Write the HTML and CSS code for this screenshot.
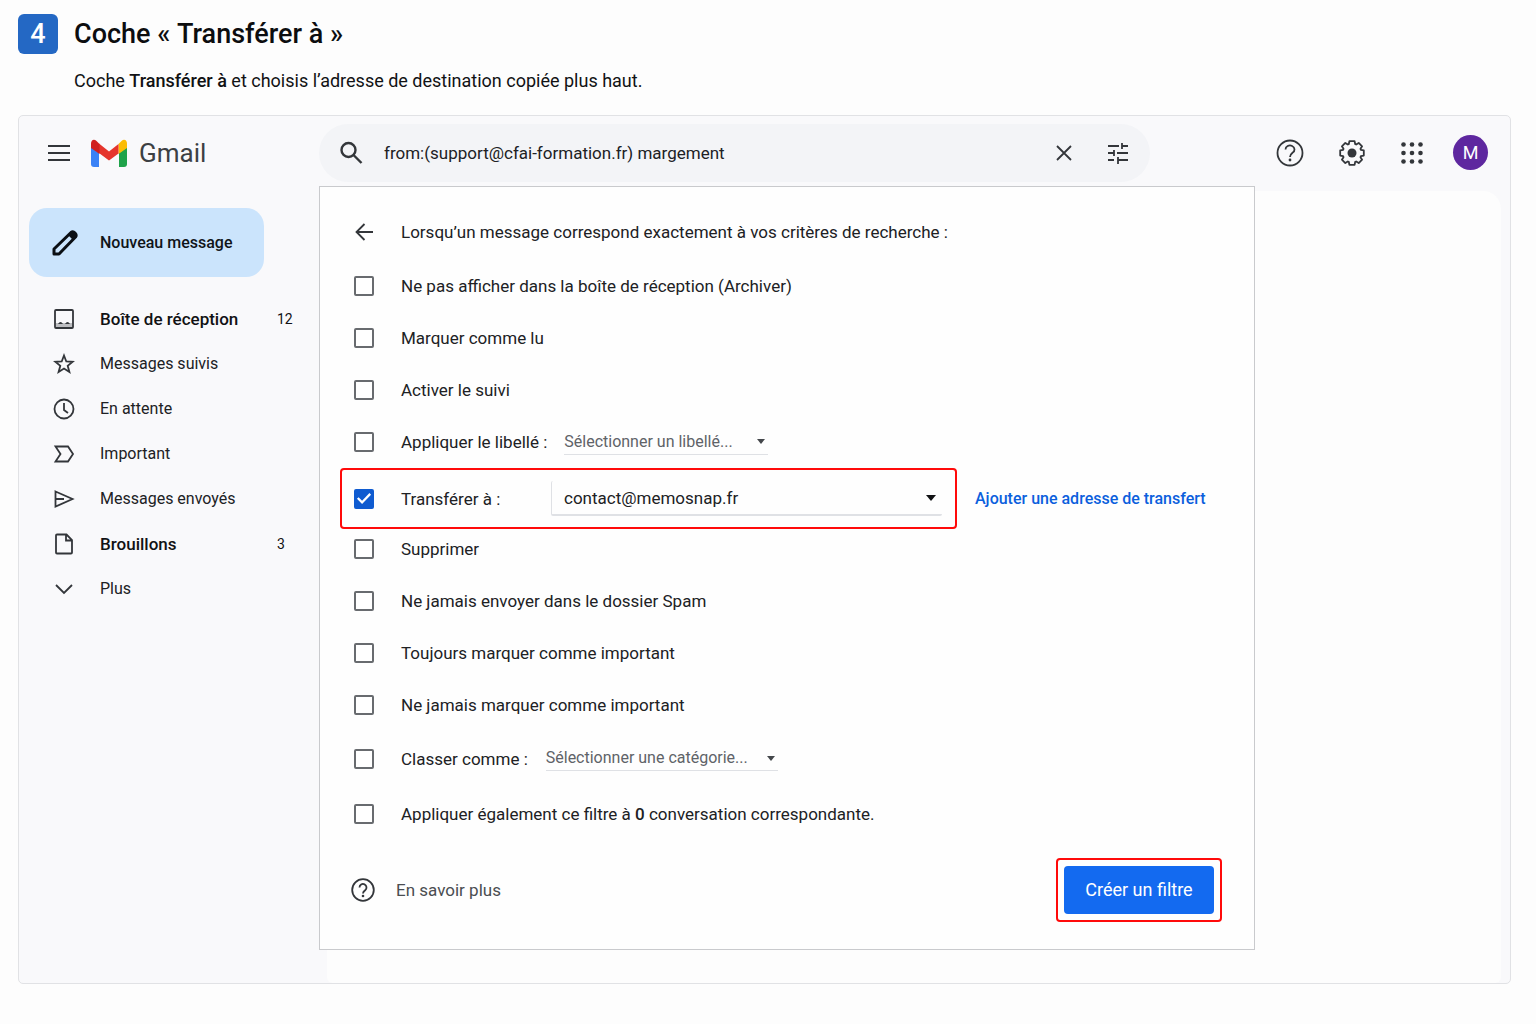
FILE: index.html
```html
<!DOCTYPE html>
<html lang="fr">
<head>
<meta charset="utf-8">
<meta name="viewport" content="width=device-width, initial-scale=1">
<title>Coche « Transférer à »</title>
<link rel="stylesheet" href="styles.css">
</head>
<body>
<header class="step">
  <span class="step-number">4</span>
  <h1 class="step-title">Coche «&nbsp;Transférer à&nbsp;»</h1>
  <p class="step-text">Coche <strong>Transférer à</strong> et choisis l’adresse de destination copiée plus haut.</p>
</header>

<div class="mail">
  <div class="topbar">
    <div class="brand">
      <button class="icon-button" type="button" aria-label="Menu principal">
        <svg class="icon" width="24" height="24" viewBox="0 0 24 24"><path d="M1 5h22M1 12h22M1 19h22"/></svg>
      </button>
      <svg class="logo" width="38" height="28" viewBox="0 0 38 28" aria-hidden="true">
        <path fill="#3b82f6" d="M1 8l8 6v14H4a3 3 0 0 1-3-3z"/>
        <path fill="#1fa34a" d="M37 8l-8 6v14h5a3 3 0 0 0 3-3z"/>
        <path fill="#fbbc04" d="M28.500 5l3-3C34-.500 37 1 37 4.500V9l-8.500 6z"/>
        <path fill="#e5352d" d="M9 4.500l10 8 9.500-7.500V14.500L19 21.500 9 14z"/>
        <path fill="#d01f1f" d="M9.500 5l-3-3C4-.500 1 1 1 4.500V9l8.500 6z"/>
      </svg>
      <span class="brand-name">Gmail</span>
    </div>
    <form class="search" role="search">
      <button class="icon-button" type="button" aria-label="Rechercher">
        <svg class="icon icon-bold" width="24" height="24" viewBox="0 0 24 24"><circle cx="9.500" cy="9" r="7"/><path d="M14.500 14l8 8"/></svg>
      </button>
      <input class="search-input" type="text" aria-label="Rechercher dans les messages" value="from:(support@cfai-formation.fr) margement">
      <button class="icon-button" type="button" aria-label="Effacer">
        <svg class="icon" width="24" height="24" viewBox="0 0 24 24"><path d="M5 5l14 14M19 5L5 19"/></svg>
      </button>
      <button class="icon-button" type="button" aria-label="Options de recherche">
        <svg class="icon" width="24" height="24" viewBox="0 0 24 24"><path d="M2 5h11M16 5h6M16 2v6M2 12h6M11 12h11M8 9v6M2 19h6M12 19h10M12 16v7"/></svg>
      </button>
    </form>
    <div class="actions">
      <button class="icon-button" type="button" aria-label="Aide">
        <svg class="icon" width="28" height="28" viewBox="0 0 28 28"><circle cx="14" cy="14" r="12.500"/><path d="M9.500 10.500a4.500 4 0 1 1 7 3.300C15 15 14 16 14 18"/><circle class="dot" cx="14" cy="21" r="1.400"/></svg>
      </button>
      <button class="icon-button" type="button" aria-label="Paramètres">
        <svg class="icon" width="28" height="28" viewBox="0 0 28 28"><path stroke-linejoin="round" d="M11.400 2.200h5.200l.6 2.900 1 .4 2.500-1.600 3.400 3.400-1.600 2.500.4 1 2.900.6v5.200l-2.900.6-.4 1 1.600 2.500-3.400 3.400-2.500-1.600-1 .4-.6 2.900h-5.200l-.6-2.900-1-.4-2.500 1.600-3.400-3.400 1.600-2.500-.4-1-2.900-.6v-5.200l2.900-.6.4-1-1.600-2.500 3.400-3.400 2.500 1.600 1-.4z"/><circle class="dot" cx="14" cy="14" r="4.500"/></svg>
      </button>
      <button class="icon-button" type="button" aria-label="Applications">
        <svg class="icon" width="24" height="24" viewBox="0 0 24 24"><g class="dot"><circle cx="3.500" cy="3.500" r="2.300"/><circle cx="12" cy="3.500" r="2.300"/><circle cx="20.500" cy="3.500" r="2.300"/><circle cx="3.500" cy="12" r="2.300"/><circle cx="12" cy="12" r="2.300"/><circle cx="20.500" cy="12" r="2.300"/><circle cx="3.500" cy="20.500" r="2.300"/><circle cx="12" cy="20.500" r="2.300"/><circle cx="20.500" cy="20.500" r="2.300"/></g></svg>
      </button>
      <button class="avatar" type="button" aria-label="Compte M">M</button>
    </div>
  </div>

  <div class="body">
    <aside class="sidebar">
      <button class="compose" type="button">
        <svg width="28" height="28" viewBox="0 0 28 28" aria-hidden="true"><path fill="none" stroke="#0b0f14" stroke-width="3" stroke-linejoin="round" d="M3 25v-5L20 3.500q2-1.500 4 .5t.5 4L8 25z"/><path fill="#0b0f14" d="M17 6l4-4 5 5-4 4z"/></svg>
        Nouveau message
      </button>
      <nav>
        <ul class="folders">
          <li><a class="folder strong" href="#"><svg class="icon" width="22" height="22" viewBox="0 0 22 22"><rect x="2" y="2" width="18" height="18" rx="1"/><path fill="#33363a" fill-opacity=".3" stroke="none" d="M3 15h16v4H3z"/><path fill="#33363a" stroke="none" d="M5 16q2.500-4 5 0zM12 16q2.500-4 5 0z"/></svg><span>Boîte de réception</span><span class="count">12</span></a></li>
          <li><a class="folder" href="#"><svg class="icon" width="22" height="22" viewBox="0 0 22 22"><path d="M11 2.500l2.300 6 6.400.3-5 4 1.700 6.200-5.400-3.500L5.600 19l1.700-6.200-5-4 6.400-.3z"/></svg><span>Messages suivis</span></a></li>
          <li><a class="folder" href="#"><svg class="icon" width="22" height="22" viewBox="0 0 22 22"><circle cx="11" cy="11" r="9.500"/><path d="M11 5v7l4 3"/></svg><span>En attente</span></a></li>
          <li><a class="folder" href="#"><svg class="icon" width="22" height="22" viewBox="0 0 22 22"><path d="M2.500 3.500H15l5 7.500-5 7.500H2.500L7.500 11z"/></svg><span>Important</span></a></li>
          <li><a class="folder" href="#"><svg class="icon" width="22" height="22" viewBox="0 0 22 22"><path d="M2.500 3.500L19.500 11l-17 7.500zM3 11h8"/></svg><span>Messages envoyés</span></a></li>
          <li><a class="folder strong" href="#"><svg class="icon" width="22" height="22" viewBox="0 0 22 22"><path d="M4 1.500h9.500L19 7v12.500a1 1 0 0 1-1 1H4a1 1 0 0 1-1-1v-17a1 1 0 0 1 1-1zM13 2v5.500h5.500"/></svg><span>Brouillons</span><span class="count">3</span></a></li>
          <li><a class="folder" href="#"><svg class="icon" width="22" height="22" viewBox="0 0 22 22"><path d="M3 7l8 8 8-8"/></svg><span>Plus</span></a></li>
        </ul>
      </nav>
    </aside>

    <main class="stage">
      <div class="canvas"></div>
      <form class="filter">
        <div class="filter-head">
          <button class="icon-button" type="button" aria-label="Retour">
            <svg class="icon" width="20" height="20" viewBox="0 0 20 20"><path d="M19 10H3M10.500 2L2.500 10l8 8"/></svg>
          </button>
          <span>Lorsqu’un message correspond exactement à vos critères de recherche :</span>
        </div>
        <div class="row"><input class="check" type="checkbox" id="archive"><label for="archive">Ne pas afficher dans la boîte de réception (Archiver)</label></div>
        <div class="row"><input class="check" type="checkbox" id="read"><label for="read">Marquer comme lu</label></div>
        <div class="row"><input class="check" type="checkbox" id="star"><label for="star">Activer le suivi</label></div>
        <div class="row"><input class="check" type="checkbox" id="label"><label for="label">Appliquer le libellé :</label>
          <span class="pick pick-label"><select aria-label="Libellé"><option>Sélectionner un libellé...</option></select><svg width="8" height="5" viewBox="0 0 8 5"><path d="M0 0h8L4 5z"/></svg></span>
        </div>
        <div class="forward">
          <div class="row row-marked"><input class="check" type="checkbox" id="forward" checked><label for="forward">Transférer à :</label>
            <span class="pick pick-address"><select aria-label="Adresse de transfert"><option>contact@memosnap.fr</option></select><svg width="10" height="6" viewBox="0 0 10 6"><path d="M0 0h10L5 6z"/></svg></span>
          </div>
          <a class="add-address" href="#">Ajouter une adresse de transfert</a>
        </div>
        <div class="row"><input class="check" type="checkbox" id="delete"><label for="delete">Supprimer</label></div>
        <div class="row"><input class="check" type="checkbox" id="nospam"><label for="nospam">Ne jamais envoyer dans le dossier Spam</label></div>
        <div class="row"><input class="check" type="checkbox" id="important"><label for="important">Toujours marquer comme important</label></div>
        <div class="row"><input class="check" type="checkbox" id="unimportant"><label for="unimportant">Ne jamais marquer comme important</label></div>
        <div class="row row-tall"><input class="check" type="checkbox" id="category"><label for="category">Classer comme :</label>
          <span class="pick pick-category"><select aria-label="Catégorie"><option>Sélectionner une catégorie...</option></select><svg width="8" height="5" viewBox="0 0 8 5"><path d="M0 0h8L4 5z"/></svg></span>
        </div>
        <div class="row row-tall"><input class="check" type="checkbox" id="apply"><label for="apply">Appliquer également ce filtre à <strong>0</strong> conversation correspondante.</label></div>
        <div class="filter-foot">
          <a class="learn" href="#"><svg class="icon" width="24" height="24" viewBox="0 0 24 24"><circle cx="12" cy="12" r="10.800"/><path d="M8.500 9.500a3.500 3.500 0 1 1 5.700 2.700C13 13.200 12 13.800 12 15.500"/><circle class="dot" cx="12" cy="18" r="1.300"/></svg>En savoir plus</a>
          <div class="submit-mark"><button class="submit" type="button">Créer un filtre</button></div>
        </div>
      </form>
    </main>
  </div>
</div>
</body>
</html>
```
FILE: styles.css
```css
* { box-sizing: border-box; }

body {
  margin: 0;
  padding: 14px 25px 40px 18px;
  background: #fdfdfd;
  color: #202124;
  font: 17px/24px Roboto, "Liberation Sans", sans-serif;
}

button, input, select { font: inherit; color: inherit; }
button { padding: 0; border: 0; background: none; cursor: pointer; }
a { color: inherit; text-decoration: none; }
svg { flex: none; display: block; }

.icon { fill: none; stroke: #33363a; stroke-width: 1.8; }
.icon-bold { stroke-width: 2.4; }
.dot { fill: #33363a; stroke: none; }
.icon-button { flex: none; }

/* Step heading */
.step {
  display: grid;
  grid-template-columns: 40px 1fr;
  column-gap: 16px;
  align-items: center;
}
.step-number {
  display: grid;
  place-items: center;
  height: 40px;
  border-radius: 6px;
  background: #2468c4;
  color: #fff;
  font-size: 27px;
  font-weight: 500;
}
.step-title {
  margin: 0;
  color: #0c0d0f;
  font-size: 27px;
  line-height: 40px;
  font-weight: 500;
}
.step-text {
  grid-column: 2;
  margin: 15px 0 22px;
  color: #111214;
  font-size: 18px;
}
.step-text strong, .row strong { font-weight: 500; }

/* Mail window */
.mail {
  border: 1px solid #e1e2e5;
  border-radius: 5px;
  background: #f9f9fb;
}
.topbar {
  display: grid;
  grid-template-columns: 300px 1fr 360px;
  height: 70px;
  align-items: center;
}
.brand {
  display: flex;
  align-items: center;
  padding: 4px 0 0 28px;
}
.logo { margin-left: 19px; }
.brand-name {
  margin-left: 11px;
  color: #3c4043;
  font-size: 26px;
}
.search {
  display: flex;
  align-items: center;
  gap: 30px;
  height: 58px;
  margin-top: 4px;
  padding: 0 20px;
  border-radius: 29px;
  background: #f3f4f7;
}
.search-input {
  flex: 1;
  min-width: 0;
  margin-left: -9px;
  padding: 0;
  border: 0;
  outline: 0;
  background: none;
}
.actions {
  display: flex;
  align-items: center;
  justify-content: flex-end;
  gap: 34px;
  padding: 3px 22px 0 0;
}
.avatar {
  width: 35px;
  height: 35px;
  margin-left: -5px;
  border-radius: 50%;
  background: #5e279f;
  color: #fff;
  font-size: 18px;
}

.body {
  display: grid;
  grid-template-columns: 300px 1fr;
}

/* Sidebar */
.sidebar { padding: 22px 0 0 10px; }
.compose {
  display: flex;
  align-items: center;
  gap: 21px;
  width: 235px;
  height: 69px;
  padding-left: 22px;
  border-radius: 18px;
  background: #cbe4fc;
  color: #101418;
  font-size: 16px;
  font-weight: 500;
}
.folders {
  margin: 19px 0 0;
  padding: 0;
  list-style: none;
}
.folder {
  display: grid;
  grid-template-columns: 22px 1fr 42px;
  column-gap: 25px;
  align-items: center;
  height: 45px;
  padding-left: 24px;
  font-size: 16px;
}
.strong { font-size: 17px; font-weight: 500; color: #111214; }
.count { font-size: 14px; font-weight: 400; }

/* Results area with the filter panel over it */
.stage {
  display: grid;
  grid-template-columns: 1fr 255px;
}
.canvas {
  grid-area: 1 / 1 / 2 / 3;
  margin: 5px 9px 0 8px;
  border-radius: 18px 18px 6px 6px;
  background: #fdfdfd;
}
.filter {
  grid-area: 1 / 1;
  margin-bottom: 33px;
  padding: 17px 32px 27px 34px;
  border: 1px solid #c9cacd;
  background: #fefefe;
}
.filter-head {
  display: flex;
  align-items: center;
  gap: 27px;
  height: 56px;
}
.row {
  display: flex;
  align-items: center;
  height: 52px;
}
.row-tall { height: 55px; }
.check {
  flex: none;
  display: grid;
  place-items: center;
  appearance: none;
  width: 20px;
  height: 20px;
  margin: 0 27px 0 0;
  border: 2px solid #686b6f;
  border-radius: 2px;
  background: #fff;
}
.check:checked {
  border-color: #0f5bd0;
  background: #0f5bd0;
}
.check:checked::before {
  content: "";
  width: 16px;
  height: 16px;
  background: #fff;
  clip-path: polygon(6% 52%, 16% 42%, 38% 64%, 84% 16%, 94% 26%, 38% 84%);
}
.pick {
  display: flex;
  align-items: center;
  border-bottom: 1px solid #dfe1e5;
  color: #5f6368;
  fill: #44474b;
  font-size: 16px;
}
.pick select {
  flex: 1;
  min-width: 0;
  padding: 0;
  border: 0;
  outline: 0;
  appearance: none;
  background: none;
}
.pick svg { margin-left: -8px; pointer-events: none; }
.pick-label { width: 204px; margin-left: 17px; padding-right: 3px; }
.pick-category { width: 232px; margin-left: 18px; padding-right: 3px; }
.forward {
  display: flex;
  align-items: center;
  gap: 18px;
  margin: 0 0 -6px -14px;
}
.row-marked {
  width: 617px;
  height: 61px;
  padding: 0 13px 0 12px;
  border: 2px solid #ff0a0a;
  border-radius: 4px;
}
.pick-address {
  width: 391px;
  height: 35px;
  margin-left: auto;
  padding: 0 6px 0 12px;
  border-left: 1px solid #dfe1e5;
  border-bottom: 2px solid #dfe1e5;
  border-radius: 2px;
  color: #202124;
  fill: #111214;
  font-size: 17px;
}
.add-address { color: #0b5fdd; font-weight: 500; font-size: 16px; }

.filter-foot {
  display: flex;
  align-items: center;
  justify-content: space-between;
  margin: 17px 0 0 -3px;
}
.learn {
  display: flex;
  align-items: center;
  gap: 21px;
  color: #4a4d51;
}
.submit-mark {
  padding: 6px;
  border: 2px solid #ff0a0a;
  border-radius: 4px;
}
.submit {
  width: 150px;
  height: 48px;
  border-radius: 4px;
  background: #136af0;
  color: #fff;
  font-size: 18px;
}
```
